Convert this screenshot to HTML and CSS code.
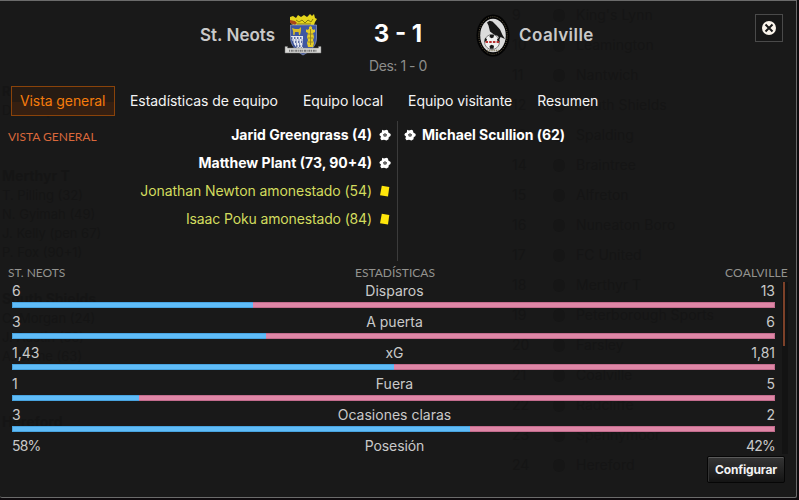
FILE: index.html
```
<!DOCTYPE html>
<html lang="es">
<head>
<meta charset="utf-8">
<title>St. Neots 3 - 1 Coalville</title>
<link rel="stylesheet" href="styles.css">
</head>
<body>
<svg width="0" height="0" class="defs">
  <symbol id="ball" viewBox="0 0 12 12">
    <path fill="#fff" d="M3.200.8 5 1.500 7.500.8 9 1.500l.3 2L11.700 5l-.2 2-1.800 1.200-.2 2-2 1.200L5 10.800l-2.500.4-1.200-1.700.7-2L.3 6l.8-1.800 1.700-.7z"/>
    <path fill="#1a1a1a" d="m6 4.200 1.900 1.300-.7 2.100H4.900l-.8-2.100z"/>
    <circle cx="6" cy="6" r=".9" fill="#8a8a8a"/>
  </symbol>
  <symbol id="card" viewBox="0 0 12 12">
    <path fill="#ffe60a" d="M2.800.8 10.300 2 9 11.500 1 10.300z"/>
  </symbol>
</svg>

<div class="backdrop">
  <div class="results">
    <p class="late">R</p>
    <p>D. Campbell (71)</p>
    <h4 class="merthyr">Merthyr T</h4>
    <p>T. Pilling (32)</p><p>N. Gyimah (49)</p><p>J. Kelly (pen 67)</p><p>P. Fox (90+1)</p>
    <h4 class="shields">South Shields</h4>
    <p>C. Morgan (24)</p><p>J. Austin (56)</p><p>A. Slone (63)</p>
    <h4 class="hereford">Hereford</h4>
  </div>
  <ol class="league">
    <li><span>9</span><i></i>King's Lynn</li>
    <li><span>10</span><i></i>Leamington</li>
    <li><span>11</span><i></i>Nantwich</li>
    <li><span>12</span><i></i>South Shields</li>
    <li><span>13</span><i></i>Spalding</li>
    <li><span>14</span><i></i>Braintree</li>
    <li><span>15</span><i></i>Alfreton</li>
    <li><span>16</span><i></i>Nuneaton Boro</li>
    <li><span>17</span><i></i>FC United</li>
    <li><span>18</span><i></i>Merthyr T</li>
    <li><span>19</span><i></i>Peterborough Sports</li>
    <li><span>20</span><i></i>Farsley</li>
    <li><span>21</span><i></i>Coalville</li>
    <li><span>22</span><i></i>Radcliffe</li>
    <li><span>23</span><i></i>Spennymoor</li>
    <li><span>24</span><i></i>Hereford</li>
  </ol>
</div>

<main class="dialog">
  <header class="scoreboard">
    <div class="team home">
      <span class="name">St. Neots</span>
      <svg class="crest" width="38" height="44" viewBox="0 0 38 44">
        <path fill="#e6d61c" d="m6 3 3-1 3 2 2-3 3 2 3-2 3 2 3-3 2 2 2-2 1 4 2 1-2 3-1 3H9L6 8z"/>
        <path fill="#a8441c" d="m6 6 5 1 2 2-2 2-5-2z"/>
        <path stroke="#6a620c" stroke-width=".8" fill="none" d="m12 6 3 2 3-2 3 3 3-3 3 2 2-3M13 10h14"/>
        <path fill="#3f57a2" stroke="#8f9cc4" stroke-width=".7" d="M6.500 11h26v13c0 8-6 13-13.500 17C12 37 6.500 31 6.500 24z"/>
        <path fill="#e4e7f0" d="M7 22h12v16c-6-3-11-8-12-16z"/>
        <path stroke="#34488c" stroke-width="1.500" stroke-dasharray="1.500 1.500" d="M7 24h12M8 28h11M9 32h10M12 36h7"/>
        <path stroke="#34488c" stroke-width="1" stroke-dasharray="1 2" d="M8.500 26H19M9 30h10M11 34h8"/>
        <path fill="#d8bd28" d="m8 14 3 1h4l2-2v4l-1 4h-1l-.5-3H11l-.5 3H9.300L9 17z"/>
        <path fill="#e4cc28" d="m25 13 1.500-1L28 13v2l2 1 1-1v3l-2 1 1 4-1 3 1 3-1 4h-5l-1-4 1-3-1-3 1-4-2-1v-3l1 1 2-1z"/>
        <path stroke="#8a7a22" stroke-width=".8" d="M24 20h5M24 24h5M24 28h5M26.500 15v16"/>
        <path fill="#d9d9d6" stroke="#777" stroke-width=".5" d="M1 32.500h2.500V34h31v-1.500H37V39H1z"/>
        <path stroke="#777" stroke-width="2" stroke-dasharray="1 .8 2 .6" d="M5 36.700h28"/>
      </svg>
    </div>
    <div class="score">
      <strong>3 - 1</strong>
      <small>Des: 1 - 0</small>
    </div>
    <div class="team away">
      <svg class="crest" width="34" height="44" viewBox="0 0 34 44">
        <ellipse cx="17" cy="21.500" rx="16.500" ry="21" fill="#030303"/>
        <ellipse cx="17" cy="21.500" rx="14.200" ry="18.800" fill="none" stroke="#6a6048" stroke-width="1" stroke-dasharray="1 1.200"/>
        <ellipse cx="17" cy="21.500" rx="12.800" ry="16.800" fill="#dcdcdc"/>
        <circle cx="16" cy="28" r="7.500" fill="#efefef" stroke="#666" stroke-width=".8"/>
        <path fill="#161616" d="m14 20.800 4 .2-.5 2.500-2 .8-2-1.200zM9 24l2 1-.5 2-2 1zM23 24l-2 1 .5 2 2 1zM13.500 32l2-1.200 2.500 1-.5 3h-3.500z"/>
        <path fill="#171717" d="m11 8.500 2.500-1.700 3 .8 3.500 3.400 4 4.500 2.500 5.500 2.500 4-4.500-2-1 2.500-1.500-3.500-4-1.500-4-3-1.500-6z"/>
        <path stroke="#b83030" stroke-width="2" stroke-dasharray="2.500 1.200" d="M9.500 28h14.500"/>
        <path stroke="#8a8064" stroke-width="1.600" stroke-dasharray="1 .8" d="M11 36.500h12"/>
      </svg>
      <span class="name">Coalville</span>
    </div>
    <button class="close" aria-label="Cerrar">
      <svg width="14" height="14" viewBox="0 0 14 14"><circle cx="7" cy="7" r="7" fill="#fbf5ec"/><path stroke="#1a1a1a" stroke-width="2" d="m3.500 3.500 7 7m0-7-7 7"/></svg>
    </button>
  </header>

  <nav class="tabs">
    <a class="active">Vista general</a>
    <a>Estadísticas de equipo</a>
    <a>Equipo local</a>
    <a>Equipo visitante</a>
    <a>Resumen</a>
  </nav>

  <section class="events">
    <h2>Vista general</h2>
    <ul class="home-events">
      <li class="goal">Jarid Greengrass (4)<svg><use href="#ball"/></svg></li>
      <li class="goal">Matthew Plant (73, 90+4)<svg><use href="#ball"/></svg></li>
      <li class="booking">Jonathan Newton amonestado (54)<svg><use href="#card"/></svg></li>
      <li class="booking poku">Isaac Poku amonestado (84)<svg><use href="#card"/></svg></li>
    </ul>
    <ul class="away-events">
      <li class="goal"><svg><use href="#ball"/></svg>Michael Scullion (62)</li>
    </ul>
  </section>

  <section class="stats">
    <div class="stats-head"><span>ST. NEOTS</span><span>ESTADÍSTICAS</span><span>COALVILLE</span></div>
    <div class="scroller">
      <div class="rows">
        <div class="row"><span>6</span><span>Disparos</span><span>13</span><div class="bar"><b style="width:31.6%"></b></div></div>
        <div class="row"><span>3</span><span>A puerta</span><span>6</span><div class="bar"><b style="width:33.3%"></b></div></div>
        <div class="row"><span>1,43</span><span>xG</span><span>1,81</span><div class="bar"><b style="width:50%"></b></div></div>
        <div class="row"><span>1</span><span>Fuera</span><span>5</span><div class="bar"><b style="width:16.7%"></b></div></div>
        <div class="row"><span>3</span><span>Ocasiones claras</span><span>2</span><div class="bar"><b style="width:60%"></b></div></div>
        <div class="row percent"><span>58%</span><span>Posesión</span><span>42%</span></div>
      </div>
      <div class="track"><div class="thumb"></div></div>
    </div>
  </section>

  <footer><button class="configure">Configurar</button></footer>
</main>
</body>
</html>
```
FILE: styles.css
```
* { box-sizing: border-box; margin: 0; padding: 0; }

body {
  width: 799px;
  height: 500px;
  overflow: hidden;
  background: #0d0a0d;
  color: #c9c9c9;
  font: 14px/20px Inter, "Open Sans", sans-serif;
}

.defs { display: block; height: 0; }
ul, ol { list-style: none; }

/* Screen that shows faintly through the dialog */
.backdrop {
  position: absolute;
  top: 0;
  left: 0;
  width: 797px;
  height: 498px;
  display: flex;
  justify-content: space-between;
  overflow: hidden;
  background: #191919;
  color: #151515;
}
.results { padding: 82px 0 0 2px; font-size: 13px; line-height: 19px; }
.results h4 { font-size: 14px; line-height: 20px; }
.results .late { font-weight: 700; }
.merthyr { margin-top: 46px; }
.shields { margin-top: 27px; }
.hereford { margin-top: 46px; }
.league { width: 289px; }
.league li { display: flex; align-items: center; height: 30px; line-height: 28px; }
.league span { width: 45px; padding-left: 4px; }
.league i { width: 12px; height: 13px; margin-right: 11px; border-radius: 6px; background: #161616; }

.dialog {
  position: relative;
  display: flex;
  flex-direction: column;
  width: 797px;
  height: 498px;
  border: solid #6b6b6b;
  border-width: 1px 1px 1px 0;
  border-radius: 0 0 2px 2px;
}

.scoreboard {
  position: relative;
  display: grid;
  grid-template-columns: 1fr 140px 1fr;
  height: 85px;
}
.team { display: flex; align-items: flex-start; padding-top: 13px; }
.team .name { margin-top: 11px; font-size: 17px; font-weight: 600; }
.crest { flex: none; }
.home { justify-content: flex-end; padding-right: 6px; gap: 9px; }
.away { gap: 9px; padding-left: 8px; }
.away .name { letter-spacing: .45px; }
.score { display: flex; flex-direction: column; align-items: center; padding-top: 19px; }
.score strong { color: #fff; font-size: 24px; line-height: 28px; font-weight: 700; }
.score small { margin-top: 8px; font-size: 14px; color: #8d8d8b; letter-spacing: -.45px; }
.close {
  position: absolute;
  top: 13px;
  right: 13px;
  display: grid;
  place-items: center;
  width: 28px;
  height: 28px;
  border: 1px solid #4a4a4a;
  background: #171717;
}

.tabs { display: flex; gap: 7px; padding-left: 11px; color: #f4f4f4; letter-spacing: -.05px; }
.tabs a { height: 30px; padding: 4px 8px; border: 1px solid transparent; }
.tabs .active {
  width: 104px;
  margin-right: -1px;
  padding-right: 0;
  letter-spacing: -.09px;
  white-space: nowrap;
  color: #f57c0c;
  border-color: #8a430a;
  background: linear-gradient(#261b13 52%, #351f11 52%);
}

.events { display: grid; grid-template-columns: 130px 267px 1fr; height: 140px; margin-top: 5px; }
.events h2 {
  padding: 6px 0 0 8px;
  font: 400 12px/20px Lato, sans-serif;
  color: #d9683b;
  text-transform: uppercase;
}
.events li { display: flex; align-items: center; height: 28px; white-space: nowrap; }
.events svg { flex: none; width: 12px; height: 12px; }
.home-events { padding-right: 6px; }
.home-events li { justify-content: flex-end; gap: 7px; }
.away-events { padding-left: 6px; border-left: 1px solid #3b3b3b; }
.away-events li { gap: 6px; letter-spacing: -.04px; }
.goal { color: #fff; font-weight: 700; }
.booking { color: #d2dc5e; letter-spacing: -.07px; }
.poku { letter-spacing: -.14px; }

.stats-head {
  display: grid;
  grid-template-columns: 347px auto 1fr;
  height: 20px;
  margin-top: 1px;
  padding: 0 8px;
  font: 12px/22px Lato, sans-serif;
  color: #93938f;
}
.stats-head span:last-child { text-align: right; letter-spacing: .2px; }
.scroller { display: flex; height: 172px; }
.rows { width: 775px; padding-left: 12px; overflow: hidden; }
.row { display: grid; grid-template-columns: 1fr auto 1fr; grid-template-rows: 20px 6px; height: 31px; line-height: 18px; }
.row span:nth-child(2) { padding-left: 2px; }
.row span:nth-child(3) { text-align: right; }
.percent span { letter-spacing: -.8px; }
.percent span:nth-child(2) { letter-spacing: -.1px; }
.bar { grid-column: 1 / -1; background: #df86a6; box-shadow: inset 0 0 0 1px #c26c8d; }
.bar b { display: block; height: 6px; background: #5fbcf8; box-shadow: inset 1px 0 #48a3df, inset 0 1px #48a3df, inset 0 -1px #48a3df; }
.track { width: 6px; margin-left: 7px; background: #131313; }
.thumb { width: 2px; height: 64px; margin-left: 1px; background: #7d4129; }

footer { display: flex; justify-content: flex-end; padding: 2px 11px 0 0; }
.configure {
  width: 78px;
  height: 27px;
  border: 1px solid #060606;
  border-radius: 2px;
  background: linear-gradient(#353535, #141414);
  box-shadow: inset 0 1px #5a5a5a, inset 1px 0 #333;
  color: #f2f2f2;
  font: 700 12px Inter, sans-serif;
  letter-spacing: -.15px;
}
```
